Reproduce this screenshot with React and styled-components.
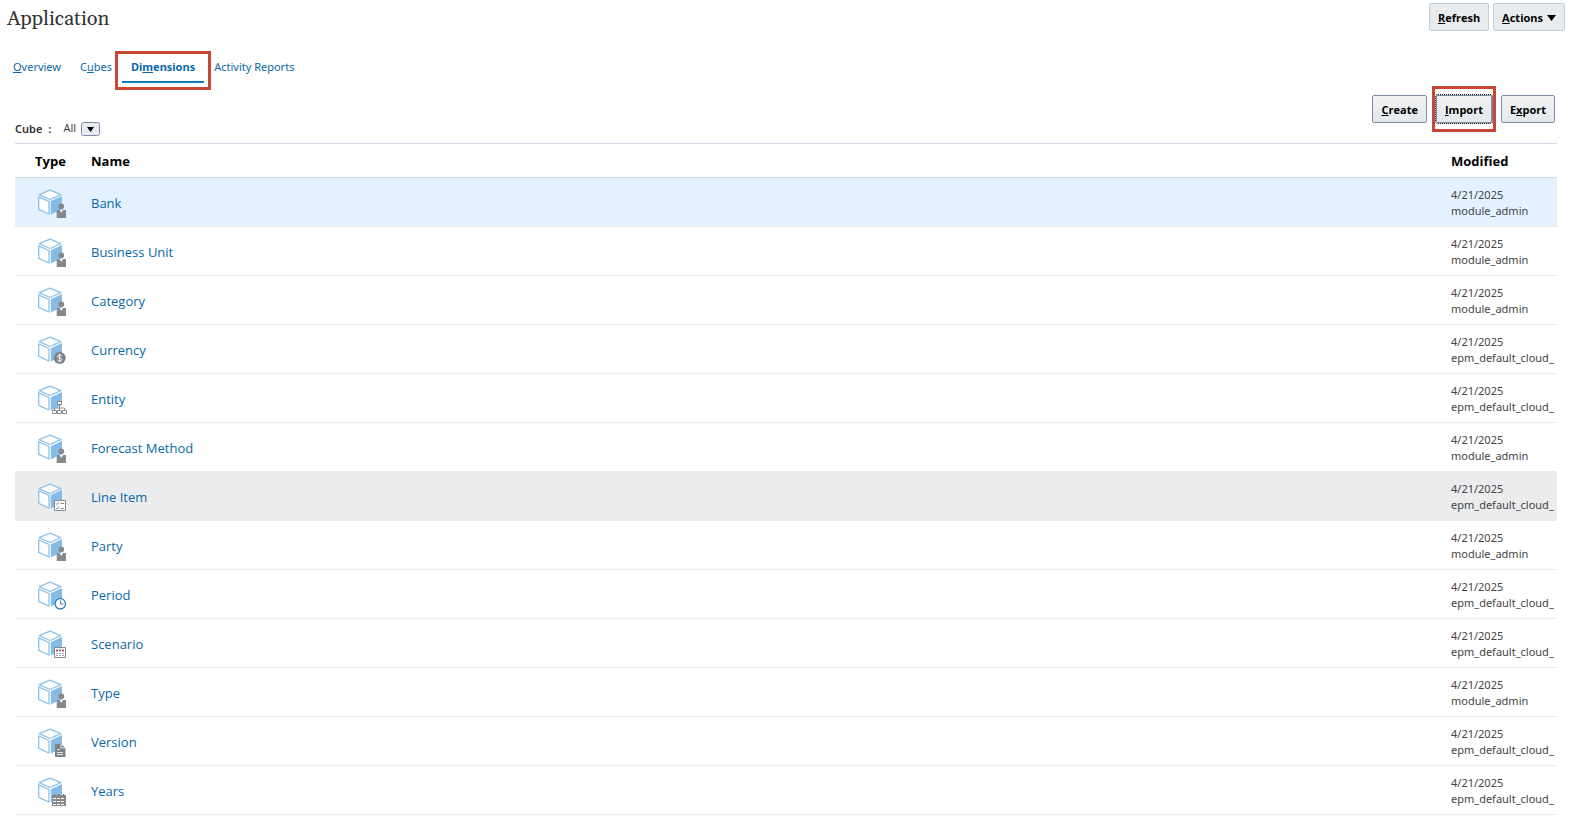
import React from "react";
import styled, { createGlobalStyle, css } from "styled-components";

const GlobalStyle = createGlobalStyle`
  *, *::before, *::after { box-sizing: border-box; }
  body {
    margin: 0;
    background: #fff;
    color: #333;
    font-family: "Noto Sans", "Open Sans", sans-serif;
    font-size: 11px;
  }
`;

const callout = css`
  position: relative;
  &::after {
    content: "";
    position: absolute;
    border: 3px solid #c74634;
    pointer-events: none;
  }
`;

const Header = styled.header`
  display: flex;
  justify-content: space-between;
  padding: 3px 7px 0;
`;

const Title = styled.h1`
  margin: 0;
  font: 400 20px/32px Gelasio, Georgia, "Liberation Serif", serif;
  color: #333;
`;

const ButtonGroup = styled.div`
  display: flex;
  gap: ${(p) => p.$gap || 4}px;
`;

const Button = styled.button`
  height: 28px;
  padding: 1px 8px 0;
  border: 1px solid ${(p) => (p.$strong ? "#7d8aa8" : "#c4ced7")};
  border-radius: 2px;
  background: ${(p) => (p.$strong ? "linear-gradient(#f1f2f4, #e4e8ea)" : "#e8ecef")};
  color: #000;
  font: 700 11px/16px "Open Sans", "Noto Sans", sans-serif;
  white-space: nowrap;
  ${(p) =>
    p.$callout &&
    css`
      ${callout}
      outline: 1px dotted #000;
      outline-offset: 0;
      &::after { inset: -10px -5px; }
    `}
`;

const Caret = styled.svg`
  width: 9px;
  height: 6px;
  margin-left: 4px;
  vertical-align: 1px;
`;

const Tabs = styled.nav`
  display: flex;
  gap: 19px;
  padding: 24px 13px 0;
`;

const Tab = styled.a`
  padding-bottom: 6px;
  color: #0a68a8;
  line-height: 16px;
  text-decoration: none;
  ${(p) =>
    p.$active &&
    css`
      ${callout}
      margin: 0 -9px;
      padding: 0 9px 6px;
      border-bottom: 2px solid #0a7cc9;
      font-weight: 700;
      &::after { inset: -8px -7px -9px; }
    `}
`;

const Toolbar = styled.div`
  display: flex;
  justify-content: space-between;
  align-items: flex-start;
  height: 60px;
  padding: 12px 17px 0 15px;
`;

const Filter = styled.div`
  display: flex;
  align-self: flex-end;
  align-items: center;
  gap: 12px;
  height: 18px;
  margin-bottom: 6px;
`;

const FilterLabel = styled.label`
  display: flex;
  gap: 6px;
  font-weight: 600;
  color: #333;
`;

const SelectBox = styled.span`
  position: relative;
  display: flex;
  align-items: center;
`;

const Select = styled.select`
  appearance: none;
  width: 37px;
  height: 18px;
  padding: 0;
  border: 0;
  background: transparent;
  color: #444;
  font: 11px/18px "Noto Sans", "Open Sans", sans-serif;
`;

const SelectArrow = styled.svg`
  position: absolute;
  right: 0;
  top: 3px;
  width: 19px;
  height: 14px;
  pointer-events: none;
`;

const TableWrap = styled.main`
  padding: 0 15px;
`;

const Table = styled.table`
  width: 100%;
  table-layout: fixed;
  border-collapse: separate;
  border-spacing: 0;
  border-top: 1px solid #d0dde9;
`;

const HeadCell = styled.th`
  width: ${(p) => p.$width || "auto"};
  height: 34px;
  padding: 0 0 0 ${(p) => p.$indent || 6}px;
  border-bottom: 1px solid #d0dde9;
  color: #000;
  font: 700 13px/18px "Open Sans", "Noto Sans", sans-serif;
  text-align: left;
`;

const rowColors = { selected: "#e4f1ff", hover: "#ebecee" };

const Row = styled.tr`
  background: ${(p) => rowColors[p.$state] || "#fff"};
`;

const Cell = styled.td`
  height: 49px;
  padding: 2px 0 0 ${(p) => p.$indent || 6}px;
  border-bottom: 1px solid #e9ebec;
  overflow: hidden;
  white-space: nowrap;
  vertical-align: middle;
`;

const NameLink = styled.a`
  color: #0a68a8;
  font: 13px/18px "Open Sans", "Noto Sans", sans-serif;
  text-decoration: none;
`;

const Meta = styled.div`
  color: #444;
  line-height: 16px;
`;

const Icon = styled.svg`
  display: block;
  width: 30px;
  height: 30px;
`;

const badges = {
  user: (
    <g fill="#85898c">
      <circle cx="24.300" cy="18.400" r="2.800" />
      <path d="M19.700 22h2.700l1.900 2.800 1.900-2.800h2.800v8h-9.300z" />
    </g>
  ),
  currency: (
    <g>
      <circle cx="22.700" cy="23" r="6" fill="#7e8284" />
      <path d="M24.900 21.200c-.3-.9-1.100-1.200-2.200-1.200-1.300 0-2.200.5-2.200 1.500 0 2.200 4.500.8 4.500 3.100 0 1-.9 1.500-2.300 1.500-1.200 0-2.100-.4-2.400-1.400M22.700 18.700v8.600" fill="none" stroke="#fff" strokeWidth="1" />
    </g>
  ),
  entity: (
    <g fill="#fff" stroke="#85898c">
      <path d="M22.500 21v3M17.500 26v-2h10v2M22.500 24v2" fill="none" />
      <path d="M20.500 17.500h4v3h-4zM15.500 26.500h4v3h-4zM20.500 26.500h4v3h-4zM25.500 26.500h4v3h-4z" />
    </g>
  ),
  account: (
    <g fill="none" stroke="#85898c">
      <path d="M17.500 18.500h11v10h-11z" fill="#fff" />
      <path d="M19 21.500l1 1 2-2.500M19 26l1 1 2-2.500M23.500 21.500h3.500M23.500 26.500h3.500" />
    </g>
  ),
  period: (
    <g fill="none" stroke="#2e7db6">
      <circle cx="23.300" cy="23.800" r="5.200" fill="#fff" strokeWidth="1.300" />
      <path d="M23.500 20.500v3.500h3" />
    </g>
  ),
  scenario: (
    <g>
      <path d="M17.500 18.500h11v10h-11z" fill="#fff" stroke="#85898c" />
      <path d="M19 20.500h2v2h-2z" fill="#c74634" />
      <path d="M22 20.500h2v2h-2z" fill="#2e7db6" />
      <path d="M25 20.500h2v2h-2z" fill="#c74634" />
      <path d="M19 24h2v1h-2zM22 24h2v1h-2zM25 24h2v1h-2zM19 26h2v1h-2zM22 26h2v1h-2zM25 26h2v1h-2z" fill="#a5a8aa" />
    </g>
  ),
  version: (
    <g>
      <path d="M18 17h6l4.500 4v9H18z" fill="#7e8284" />
      <path d="M24 17v4h4.500M20 22.500h3M20 25.500h6M20 27.500h6" fill="none" stroke="#fff" strokeWidth=".8" />
    </g>
  ),
  years: (
    <g>
      <path d="M15 19h14v11H15z" fill="#85898c" />
      <path d="M16 22.500h12M16 25.500h12M16 28.500h12" stroke="#fff" strokeWidth="1" strokeDasharray="3 1" />
      <path d="M17.500 18v2M22 18v2M26.500 18v2" stroke="#686c6e" />
    </g>
  ),
};

const DimensionIcon = ({ kind }) => (
  <Icon viewBox="0 0 30 30" role="img" aria-label={kind}>
    <path d="M13.800 13.300L25 8v13L13.800 26.500z" fill="#85bbe4" />
    <path
      d="M13 2.200L23.800 6.700 13 11.500 2.200 6.700zM1.700 8.800L12 13.500v12.500L1.700 21.300z"
      fill="#fff"
      stroke="#8fc1e7"
      strokeWidth="1.300"
      strokeLinejoin="round"
    />
    {badges[kind]}
  </Icon>
);

const ADMIN = "module_admin";
const CLOUD = "epm_default_cloud_";

const dimensions = [
  { name: "Bank", kind: "user", by: ADMIN, state: "selected" },
  { name: "Business Unit", kind: "user", by: ADMIN },
  { name: "Category", kind: "user", by: ADMIN },
  { name: "Currency", kind: "currency", by: CLOUD },
  { name: "Entity", kind: "entity", by: CLOUD },
  { name: "Forecast Method", kind: "user", by: ADMIN },
  { name: "Line Item", kind: "account", by: CLOUD, state: "hover" },
  { name: "Party", kind: "user", by: ADMIN },
  { name: "Period", kind: "period", by: CLOUD },
  { name: "Scenario", kind: "scenario", by: CLOUD },
  { name: "Type", kind: "user", by: ADMIN },
  { name: "Version", kind: "version", by: CLOUD },
  { name: "Years", kind: "years", by: CLOUD },
];

export default function App() {
  return (
    <>
      <GlobalStyle />
      <Header>
        <Title>Application</Title>
        <ButtonGroup>
          <Button><u>R</u>efresh</Button>
          <Button>
            <u>A</u>ctions
            <Caret viewBox="0 0 9 6" aria-hidden="true"><path d="M0 0h9L4.500 6z" /></Caret>
          </Button>
        </ButtonGroup>
      </Header>
      <Tabs>
        <Tab href="#overview"><u>O</u>verview</Tab>
        <Tab href="#cubes">C<u>u</u>bes</Tab>
        <Tab href="#dimensions" $active aria-current="page">Di<u>m</u>ensions</Tab>
        <Tab href="#activity">Activity Reports</Tab>
      </Tabs>
      <Toolbar>
        <Filter>
          <FilterLabel htmlFor="cube"><span>Cube</span><span>:</span></FilterLabel>
          <SelectBox>
            <Select id="cube" defaultValue="All"><option>All</option></Select>
            <SelectArrow viewBox="0 0 19 14" aria-hidden="true">
              <rect x=".5" y=".5" width="18" height="13" rx="2" fill="#e8ecef" stroke="#7d8aa8" />
              <path d="M6 5h7l-3.500 5z" />
            </SelectArrow>
          </SelectBox>
        </Filter>
        <ButtonGroup $gap={9}>
          <Button $strong><u>C</u>reate</Button>
          <Button $strong $callout><u>I</u>mport</Button>
          <Button $strong>E<u>x</u>port</Button>
        </ButtonGroup>
      </Toolbar>
      <TableWrap>
        <Table>
          <thead>
            <tr>
              <HeadCell $width="70px" $indent={20}>Type</HeadCell>
              <HeadCell>Name</HeadCell>
              <HeadCell $width="112px">Modified</HeadCell>
            </tr>
          </thead>
          <tbody>
            {dimensions.map((d) => (
              <Row key={d.name} $state={d.state}>
                <Cell $indent={22}><DimensionIcon kind={d.kind} /></Cell>
                <Cell><NameLink href="#dimension">{d.name}</NameLink></Cell>
                <Cell>
                  <Meta>4/21/2025</Meta>
                  <Meta>{d.by}</Meta>
                </Cell>
              </Row>
            ))}
          </tbody>
        </Table>
      </TableWrap>
    </>
  );
}
